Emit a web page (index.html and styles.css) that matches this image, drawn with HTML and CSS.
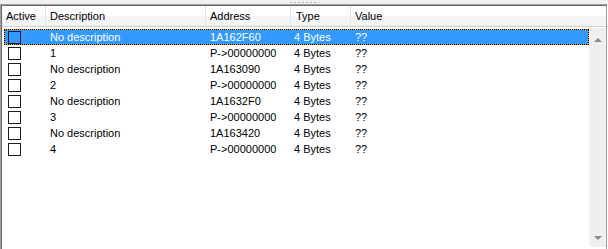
FILE: index.html
```html
<!DOCTYPE html>
<html lang="en">
<head>
    <meta charset="UTF-8">
    <title>Address List</title>
    <link rel="stylesheet" href="styles.css">
</head>
<body>
    <!-- Splitter with grip -->
    <div class="splitter"><span class="grip"></span></div>

    <div class="listview">
        <div class="header">
            <div class="col">Active</div>
            <div class="col">Description</div>
            <div class="col">Address</div>
            <div class="col">Type</div>
            <div class="col last">Value</div>
        </div>

        <div class="body">
            <div class="rows">
                <div class="row selected">
                    <div class="cell"><span class="check"></span></div>
                    <div class="cell">No description</div>
                    <div class="cell">1A162F60</div>
                    <div class="cell">4 Bytes</div>
                    <div class="cell">??</div>
                </div>
                <div class="row">
                    <div class="cell"><span class="check"></span></div>
                    <div class="cell">1</div>
                    <div class="cell">P-&gt;00000000</div>
                    <div class="cell">4 Bytes</div>
                    <div class="cell">??</div>
                </div>
                <div class="row">
                    <div class="cell"><span class="check"></span></div>
                    <div class="cell">No description</div>
                    <div class="cell">1A163090</div>
                    <div class="cell">4 Bytes</div>
                    <div class="cell">??</div>
                </div>
                <div class="row">
                    <div class="cell"><span class="check"></span></div>
                    <div class="cell">2</div>
                    <div class="cell">P-&gt;00000000</div>
                    <div class="cell">4 Bytes</div>
                    <div class="cell">??</div>
                </div>
                <div class="row">
                    <div class="cell"><span class="check"></span></div>
                    <div class="cell">No description</div>
                    <div class="cell">1A1632F0</div>
                    <div class="cell">4 Bytes</div>
                    <div class="cell">??</div>
                </div>
                <div class="row">
                    <div class="cell"><span class="check"></span></div>
                    <div class="cell">3</div>
                    <div class="cell">P-&gt;00000000</div>
                    <div class="cell">4 Bytes</div>
                    <div class="cell">??</div>
                </div>
                <div class="row">
                    <div class="cell"><span class="check"></span></div>
                    <div class="cell">No description</div>
                    <div class="cell">1A163420</div>
                    <div class="cell">4 Bytes</div>
                    <div class="cell">??</div>
                </div>
                <div class="row">
                    <div class="cell"><span class="check"></span></div>
                    <div class="cell">4</div>
                    <div class="cell">P-&gt;00000000</div>
                    <div class="cell">4 Bytes</div>
                    <div class="cell">??</div>
                </div>
            </div>

            <!-- Vertical scrollbar -->
            <div class="scrollbar">
                <span class="arrow up"></span>
                <span class="arrow down"></span>
            </div>
        </div>
    </div>
</body>
</html>
```

FILE: styles.css
```css
/* General */
html, body {
    margin: 0;
    padding: 0;
    height: 249px;
    overflow: hidden;
}

body {
    font-family: "Liberation Sans", Arial, sans-serif;
    font-size: 11px;
    color: #000;
    background-color: #f0f0f0;
}

/* Splitter */
.splitter {
    height: 4px;
    display: flex;
    justify-content: center;
    align-items: flex-start;
}

.grip {
    display: block;
    width: 29px;
    height: 1px;
    margin-top: 2px;
    margin-left: 1px;
    background: repeating-linear-gradient(90deg, #b4b4b4 0 2px, transparent 2px 4px);
}

/* List view */
.listview {
    height: 250px;
    display: flex;
    flex-direction: column;
    border-top: 1px solid #a0a0a0;
    border-left: 1px solid #a0a0a0;
    border-right: 1px solid #ffffff;
    box-shadow: inset 1px 1px 0 #696969, inset -1px 0 0 #a0a0a0;
    padding: 1px 1px 0 1px;
    background-color: #ffffff;
}

/* Header */
.header {
    height: 20px;
    display: grid;
    grid-template-columns: 44px 160px 85px 60px 1fr;
    background: linear-gradient(#ffffff 0, #ffffff 50%, #f3f4f6 50%, #f3f4f6 100%);
    border-bottom: 1px solid #d5d5d5;
}

.header .col {
    padding-left: 4px;
    line-height: 20px;
    border-right: 1px solid #e3e5e8;
    white-space: nowrap;
}

.header .col:nth-child(4) {
    padding-left: 5px;
}

.header .col.last {
    border-right: none;
}

/* Body */
.body {
    flex: 1;
    display: flex;
    padding-top: 1px;
}

.rows {
    flex: 1;
    padding: 1px 0 0 2px;
}

.row {
    height: 16px;
    display: grid;
    grid-template-columns: 42px 160px 84px 61px 1fr;
    box-sizing: border-box;
}

.row .cell {
    padding-left: 4px;
    line-height: 16px;
    white-space: nowrap;
}

/* Selected row with focus rectangle */
.row.selected {
    grid-template-columns: 41px 160px 84px 61px 1fr;
    color: #ffffff;
    border: 1px dotted #000000;
    background: linear-gradient(#3399ff, #3399ff) padding-box, linear-gradient(#f0a030, #f0a030) border-box;
}

.row.selected .cell {
    line-height: 14px;
}

/* Checkbox */
.check {
    display: block;
    width: 13px;
    height: 13px;
    box-sizing: border-box;
    margin-top: 2px;
    border: 1px solid #1c1c1c;
    background-color: #ffffff;
}

.row.selected .check {
    margin-top: 1px;
    margin-left: -1px;
    background-color: transparent;
}

/* Scrollbar */
.scrollbar {
    width: 17px;
    height: 219px;
    position: relative;
    background-color: #efefef;
    border-left: 1px solid #f7f7f7;
    box-sizing: border-box;
}

.arrow {
    position: absolute;
    left: 4px;
    width: 0;
    height: 0;
    border-left: 4px solid transparent;
    border-right: 4px solid transparent;
}

.arrow.up {
    top: 10px;
    border-bottom: 4px solid #8a8a8a;
}

.arrow.down {
    bottom: 7px;
    border-top: 4px solid #8a8a8a;
}
```
